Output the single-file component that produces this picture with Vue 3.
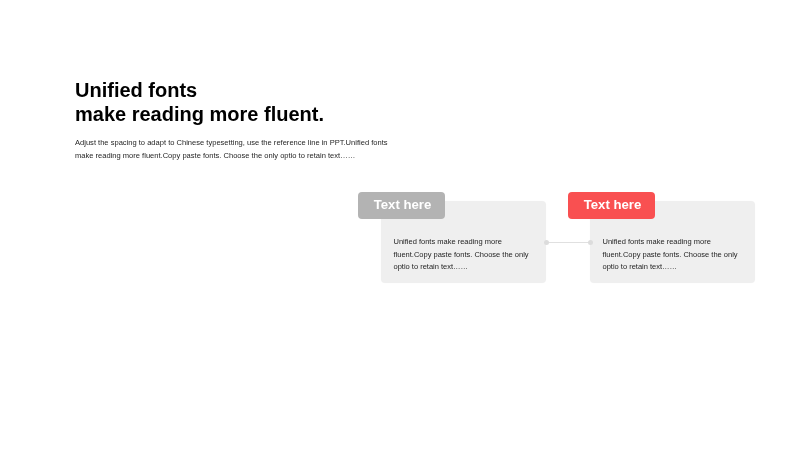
<script setup>
const items = [
  { label: 'Text here', tone: 'grey' },
  { label: 'Text here', tone: 'red' },
]
const body = 'Unified fonts make reading more fluent.Copy paste fonts. Choose the only optio to retain text……'
</script>

<template>
  <main class="page">
    <header class="intro">
      <h1 class="title">Unified fonts<br />make reading more fluent.</h1>
      <p class="lead">Adjust the spacing to adapt to Chinese typesetting, use the reference line in PPT.Unified fonts make reading more fluent.Copy paste fonts. Choose the only optio to retain text……</p>
    </header>
    <section class="flow">
      <template v-for="(item, i) in items" :key="i">
        <div v-if="i > 0" class="link"><i class="dot start"></i><i class="line"></i><i class="dot end"></i></div>
        <article class="card">
          <span class="badge" :class="item.tone">{{ item.label }}</span>
          <p class="text">{{ body }}</p>
        </article>
      </template>
    </section>
  </main>
</template>

<style scoped>
.page {
  width: 800px;
  height: 450px;
  box-sizing: border-box;
  padding: 79px 0 0 75px;
  background: #fff;
  font-family: "Liberation Sans", Arial, sans-serif;
  overflow: hidden;
  filter: blur(0.3px);
}
.intro { width: 320px; }
.title {
  margin: 0;
  font-size: 20px;
  line-height: 23.5px;
  font-weight: 700;
  color: #000;
}
.lead {
  margin: 11px 0 0;
  font-size: 7.55px;
  line-height: 12.6px;
  color: #1f1f1f;
}
.flow {
  display: flex;
  margin: 39px 0 0 306px;
}
.card {
  position: relative;
  box-sizing: border-box;
  width: 165px;
  height: 82px;
  padding: 35px 10px 0 12.5px;
  background: #efefef;
  border-radius: 4px;
  box-shadow: 0 0 2px rgba(0, 0, 0, 0.02);
}
.text {
  margin: 0;
  font-size: 7.5px;
  line-height: 12.6px;
  color: #1f1f1f;
}
.badge {
  position: absolute;
  left: -23px;
  top: -9px;
  box-sizing: border-box;
  width: 87px;
  height: 27px;
  padding: 0 0 2px 2px;
  border-radius: 4px;
  display: flex;
  align-items: center;
  justify-content: center;
  font-size: 13.2px;
  font-weight: 700;
  color: #fff;
}
.grey { background: #b3b3b3; }
.red { background: #f95051; left: -22px; }
.link {
  position: relative;
  z-index: 1;
  width: 44px;
  height: 82px;
  display: flex;
  align-items: center;
}
.dot {
  flex: none;
  width: 5px;
  height: 5px;
  border-radius: 50%;
  background: #dcdcdc;
}
.start { margin-left: -2.5px; }
.end { margin-right: -2.5px; }
.line {
  flex: 1;
  height: 1px;
  background: #e0e0e0;
}
</style>
